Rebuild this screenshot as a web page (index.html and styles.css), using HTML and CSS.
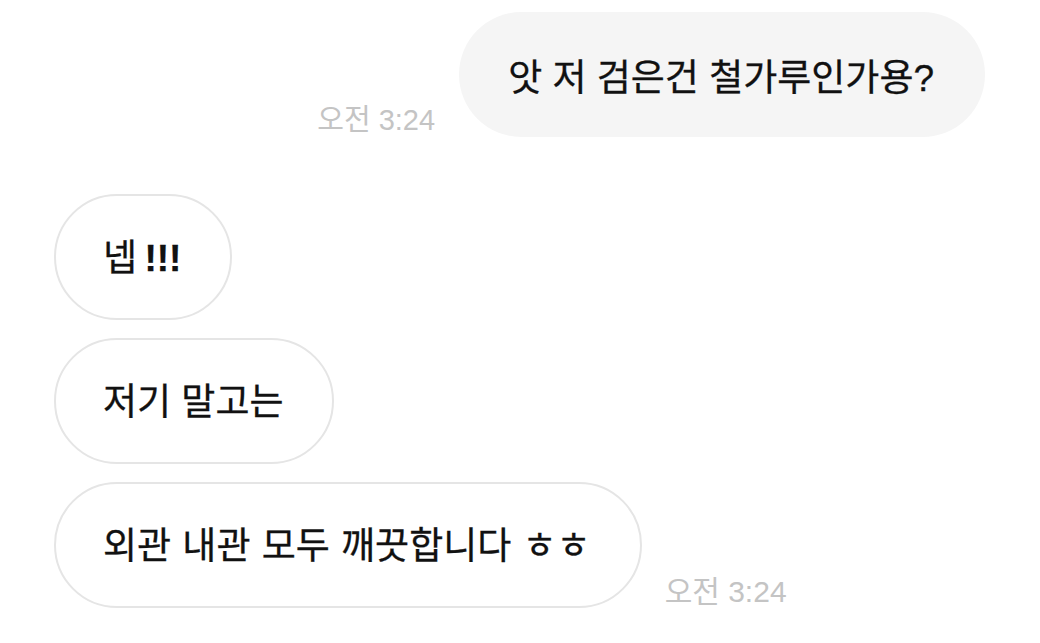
FILE: index.html
```html
<!DOCTYPE html>
<html lang="ko">
<head>
<meta charset="utf-8">
<link rel="stylesheet" href="styles.css">
</head>
<body>
<div class="chat">
  <div class="row out">
    <span class="time">오전 3:24</span>
    <div class="bubble mine">앗 저 검은건 철가루인가용?</div>
  </div>
  <div class="row in first">
    <div class="bubble theirs">넵 <b class="bang">!!!</b></div>
  </div>
  <div class="row in">
    <div class="bubble theirs">저기 말고는</div>
  </div>
  <div class="row in">
    <div class="bubble theirs wide">외관 내관 모두 깨끗합니다 ㅎㅎ</div>
    <span class="time late">오전 3:24</span>
  </div>
</div>
</body>
</html>
```
FILE: styles.css
```css
html, body {
  margin: 0;
  padding: 0;
  background: #ffffff;
}
body {
  width: 1040px;
  height: 643px;
  overflow: hidden;
  font-family: "Liberation Sans", "Noto Sans CJK KR", sans-serif;
  color: #111111;
}
.chat {
  display: flex;
  flex-direction: column;
  padding: 12px 55px 0 54px;
}
.row {
  display: flex;
  align-items: flex-end;
}
.row.out {
  justify-content: flex-end;
  gap: 24px;
}
.row.in {
  gap: 23px;
  margin-top: 18px;
}
.row.in.first {
  margin-top: 57px;
}
.bubble {
  box-sizing: border-box;
  height: 125px;
  border-radius: 63px;
  display: flex;
  align-items: center;
  font-size: 37px;
  font-weight: 400;
  line-height: 1;
  white-space: nowrap;
  padding-top: 8px;
  -webkit-text-stroke: 0.3px #111111;
}
.bubble .bang {
  font-weight: 700;
  margin-left: 0.2em;
}
.bubble.mine {
  background: #f5f5f5;
  padding-left: 49px;
  padding-right: 51px;
}
.bubble.theirs {
  height: 126px;
  border: 2px solid #e5e5e5;
  padding-left: 47px;
  padding-right: 49px;
  padding-top: 3px;
}
.bubble.wide {
  word-spacing: 1px;
}
.time {
  font-size: 29px;
  line-height: 1;
  color: #c4c4c4;
  white-space: nowrap;
  margin-bottom: 2px;
}
.time.late {
  font-size: 30px;
  margin-bottom: 1px;
}
```
